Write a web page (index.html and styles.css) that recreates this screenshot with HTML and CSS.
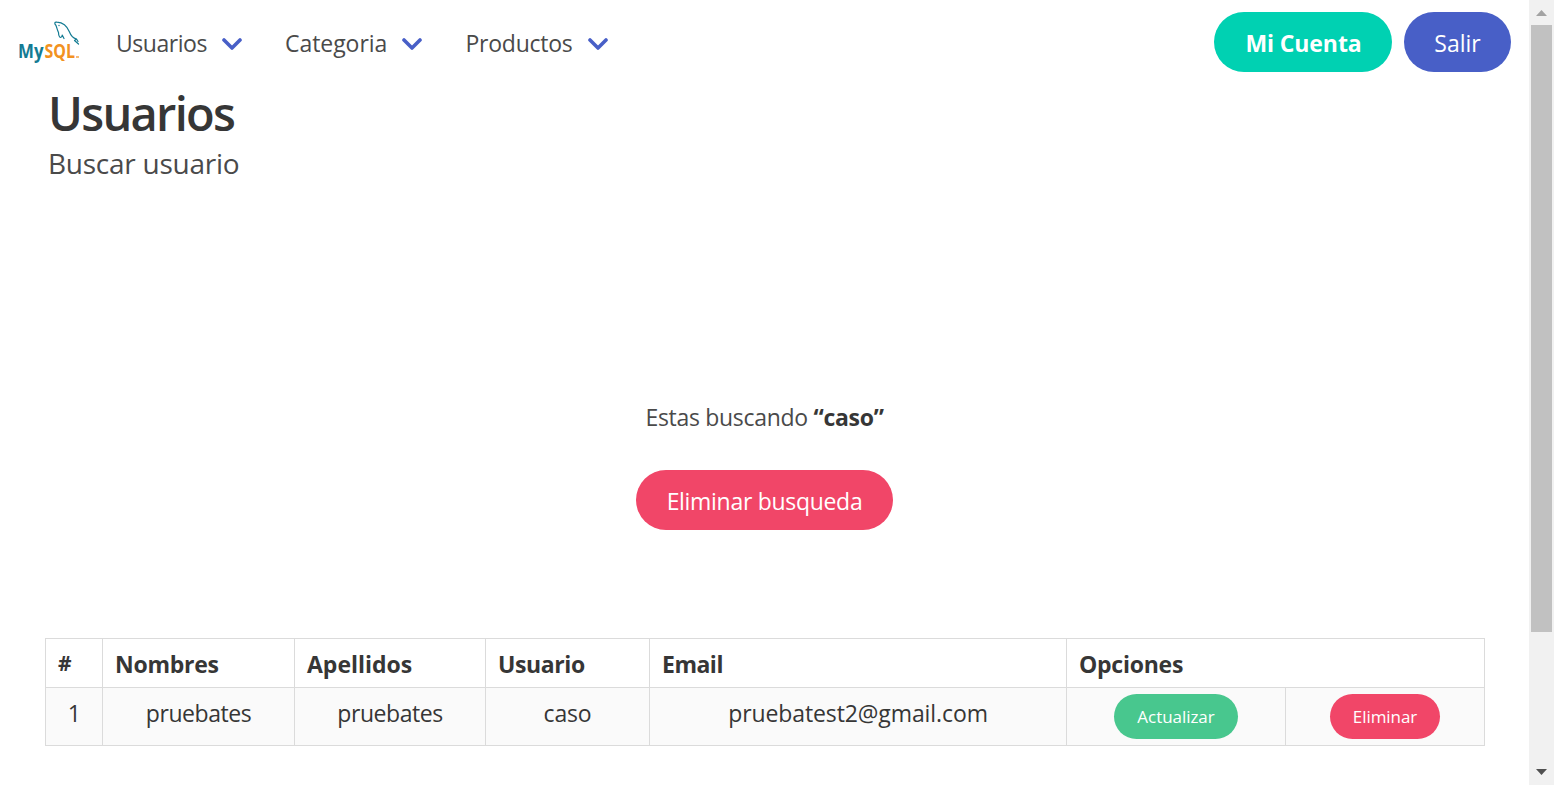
FILE: index.html
```html
<!DOCTYPE html>
<html lang="es">
<head>
<meta charset="utf-8">
<title>Usuarios</title>
<link rel="stylesheet" href="styles.css">
</head>
<body>
<div class="page">
  <nav class="navbar">
    <a class="brand" aria-label="MySQL">
      <svg class="logo" width="64" height="44" viewBox="0 0 64 44">
        <g fill="none" stroke="#147b93" stroke-width="1.2" stroke-linejoin="round" stroke-linecap="round">
          <path d="M43 16.500 C41 19 39.500 16 39.500 12.500 C38 9.500 38 8 37 5.500 C35 3.500 35.500 1.800 38 2.200 C44 2.500 48 6 50.500 12 C52 16 53.500 18 57.500 19 L55.500 20.500 L59.500 24 M57.500 19 L59 21.500"/>
          <path d="M43 16.500 L43.200 15 L45 18.500"/>
        </g>
        <circle cx="40" cy="5.500" r=".7" fill="#147b93"/>
        <text class="logo-my" x="-1" y="38" textLength="25.500" lengthAdjust="spacingAndGlyphs">My</text>
        <text class="logo-sql" x="25.500" y="38" textLength="30.500" lengthAdjust="spacingAndGlyphs">SQL</text>
        <path d="M57 37h3" stroke="#f3a54a" stroke-width="1.500"/>
      </svg>
    </a>
    <a class="nav-link users"><span>Usuarios</span><svg class="chevron" width="20" height="12" viewBox="0 0 20 12"><path d="M2 2l8 8 8-8"/></svg></a>
    <a class="nav-link category"><span>Categoria</span><svg class="chevron" width="20" height="12" viewBox="0 0 20 12"><path d="M2 2l8 8 8-8"/></svg></a>
    <a class="nav-link products"><span>Productos</span><svg class="chevron" width="20" height="12" viewBox="0 0 20 12"><path d="M2 2l8 8 8-8"/></svg></a>
    <div class="actions">
      <a class="button account">Mi Cuenta</a>
      <a class="button logout">Salir</a>
    </div>
  </nav>
  <header class="heading">
    <h1 class="title">Usuarios</h1>
    <h2 class="subtitle">Buscar usuario</h2>
  </header>
  <main class="content">
    <form class="search">
      <p class="query">Estas buscando <strong>“caso”</strong></p>
      <button type="button" class="button clear">Eliminar busqueda</button>
    </form>
    <table class="table">
      <colgroup><col class="c-num"><col class="c-name"><col class="c-last"><col class="c-user"><col class="c-mail"><col class="c-update"><col class="c-delete"></colgroup>
      <thead><tr><th class="hash">#</th><th>Nombres</th><th class="apellidos">Apellidos</th><th class="usuario">Usuario</th><th class="email">Email</th><th colspan="2">Opciones</th></tr></thead>
      <tbody><tr><td>1</td><td>pruebates</td><td>pruebates</td><td class="user">caso</td><td class="mail">pruebatest2@gmail.com</td><td><a class="button small update">Actualizar</a></td><td><a class="button small delete">Eliminar</a></td></tr></tbody>
    </table>
  </main>
</div>
<aside class="scrollbar">
  <svg width="11" height="6" viewBox="0 0 11 6"><path d="M0 6L5.500 0 11 6z" fill="#a3a3a3"/></svg>
  <div class="thumb"></div>
  <svg class="down" width="11" height="6" viewBox="0 0 11 6"><path d="M0 0h11L5.500 6z" fill="#505050"/></svg>
</aside>
</body>
</html>
```
FILE: styles.css
```css
* { box-sizing: border-box; }
body {
  margin: 0;
  height: 785px;
  display: flex;
  overflow: hidden;
  background: #fff;
  color: #4a4a4a;
  font: 23px/36px "Open Sans", "Noto Sans", sans-serif;
}
.page { width: 1529px; }
.navbar { height: 84px; display: flex; align-items: center; padding: 0 18px 0 19px; }
.brand { width: 97px; height: 44px; }
.logo { display: block; }
.logo-my, .logo-sql { font: 700 20px "Open Sans", sans-serif; }
.logo-my { fill: #147b93; }
.logo-sql { fill: #f29221; }
.nav-link { display: flex; align-items: center; justify-content: space-between; padding-top: 2px; }
.users { width: 126px; margin-right: 43px; letter-spacing: -.45px; }
.category { width: 137px; margin-right: 43.500px; letter-spacing: -.05px; }
.products { width: 142px; letter-spacing: -.25px; }
.chevron { margin-top: 2px; fill: none; stroke: #485fc7; stroke-width: 3.600; stroke-linecap: round; stroke-linejoin: round; }
.actions { display: flex; gap: 12px; margin-left: auto; }
.button {
  display: inline-flex;
  align-items: center;
  justify-content: center;
  height: 60px;
  padding: 2px 0 0;
  border: 0;
  border-radius: 30px;
  color: #fff;
  font: inherit;
  white-space: nowrap;
}
.account { width: 178px; background: #00d1b2; font-weight: 700; padding-left: 1px; letter-spacing: -.1px; }
.logout { width: 107px; background: #485fc7; }
.heading { padding: 0 48px; }
.title { margin: 0; padding-top: 1px; color: #363636; font-size: 47px; line-height: 56px; font-weight: 600; letter-spacing: -1.700px; }
.subtitle { margin: 0; padding-top: 4px; font-size: 28px; line-height: 36px; font-weight: 400; letter-spacing: -.25px; }
.content { padding: 218px 45px 0; }
.search { display: flex; flex-direction: column; align-items: center; height: 239px; }
.query { margin: 0 0 35px; letter-spacing: -.3px; }
.query strong { color: #363636; }
.clear { width: 257px; background: #f14668; letter-spacing: -.3px; }
.table { width: 1440px; table-layout: fixed; border-collapse: collapse; color: #363636; }
.table th, .table td { border: 1px solid #dbdbdb; vertical-align: top; }
.table th { height: 49px; padding: 7px 12px 0; text-align: left; line-height: 36px; letter-spacing: -.25px; }
.table .apellidos { letter-spacing: 0; }
.table .usuario { letter-spacing: -.4px; }
.table .email { letter-spacing: -.5px; }
.table td { height: 58px; padding: 6px 0 0; text-align: center; line-height: 39px; background: #fafafa; letter-spacing: -.45px; }
.table .user { letter-spacing: -.2px; }
.table .mail { letter-spacing: -.1px; }
.table .hash { padding-top: 6px; font-size: 21px; }
.c-num { width: 57px; }
.c-name { width: 192px; }
.c-last { width: 191px; }
.c-user { width: 164px; }
.c-mail { width: 417px; }
.c-update { width: 219px; }
.c-delete { width: 199px; }
.small { display: flex; height: 45px; margin: 0 auto; padding-top: 0; font-size: 17px; line-height: 24px; letter-spacing: -.05px; }
.update { width: 124px; background: #48c78e; }
.delete { width: 110px; background: #f14668; }
.scrollbar { width: 25px; height: 785px; display: flex; flex-direction: column; align-items: center; padding: 10px 0; background: #f1f1f1; }
.thumb { width: 21px; height: 607px; margin-top: 9px; background: #c1c1c1; }
.down { margin-top: auto; }
```
